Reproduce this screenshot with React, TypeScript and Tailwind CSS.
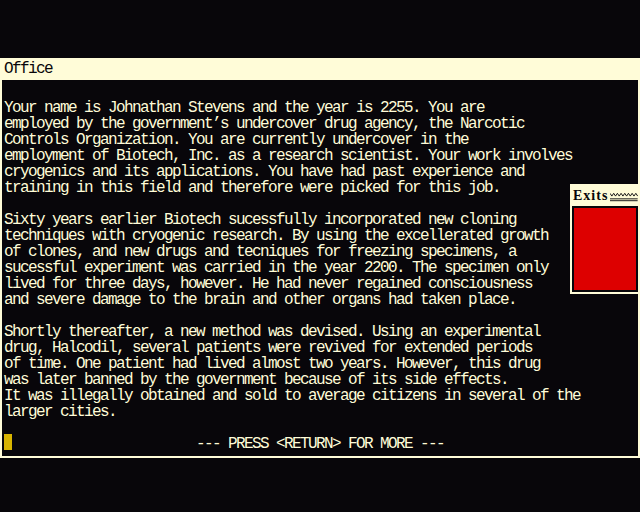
const cream = 'bg-[#fffcd8]'

const story = [
  'Your name is Johnathan Stevens and the year is 2255. You are',
  'employed by the government’s undercover drug agency, the Narcotic',
  'Controls Organization. You are currently undercover in the',
  'employment of Biotech, Inc. as a research scientist. Your work involves',
  'cryogenics and its applications. You have had past experience and',
  'training in this field and therefore were picked for this job.',
  '',
  'Sixty years earlier Biotech sucessfully incorporated new cloning',
  'techniques with cryogenic research. By using the excellerated growth',
  'of clones, and new drugs and tecniques for freezing specimens, a',
  'sucessful experiment was carried in the year 2200. The specimen only',
  'lived for three days, however. He had never regained consciousness',
  'and severe damage to the brain and other organs had taken place.',
  '',
  'Shortly thereafter, a new method was devised. Using an experimental',
  'drug, Halcodil, several patients were revived for extended periods',
  'of time. One patient had lived almost two years. However, this drug',
  'was later banned by the government because of its side effects.',
  'It was illegally obtained and sold to average citizens in several of the',
  'larger cities.',
  '',
]

function ExitsWindow() {
  return (
    <div className={`absolute left-[570px] top-[184px] flex h-[110px] w-[70px] flex-col p-[2px] ${cream}`}>
      <div className="flex h-[20px] items-center gap-[2px] pl-[1px]">
        <span className="font-['Liberation_Serif'] text-[14px] font-bold leading-none tracking-[1px] text-[#08060a]">
          Exits
        </span>
        <svg width="30" height="10" viewBox="0 0 30 10" className="mt-[1px]">
          <polyline
            points="0,1 2,4 4,1 6,4 8,1 10,4 12,1 14,4 16,1 18,4 20,1 22,4 24,1 26,4 28,1 30,4"
            fill="none"
            stroke="#08060a"
            strokeWidth="1"
          />
          <line x1="0" y1="7" x2="30" y2="7" stroke="#08060a" strokeWidth="1" />
          <line x1="0" y1="9" x2="30" y2="9" stroke="#08060a" strokeWidth="1" />
        </svg>
      </div>
      <div className="flex-1 bg-[#08060a] p-[2px]">
        <div className="h-full w-full bg-[#dd0000]" />
      </div>
    </div>
  )
}

export default function App() {
  return (
    <div className="relative h-[512px] w-[640px] overflow-hidden bg-[#08060a] font-['Liberation_Mono'] text-[16px] tracking-[-1.6px] text-[#fffcd8]">
      <div className="h-[58px]" />
      <div className="flex h-[400px] flex-col border-x-2 border-b-2 border-[#fffcd8]">
        <div className={`flex h-[22px] items-end pb-[3px] pl-[2px] text-[#08060a] ${cream}`}>
          <span className="leading-4">Office</span>
        </div>
        <div className="whitespace-pre pl-[2px] pt-[20px]">
          {story.map((line, i) => (
            <div key={i} className="h-4 leading-4">
              {line}
            </div>
          ))}
          <div className="flex h-4 leading-4">
            <span className="relative -top-[2px] inline-block h-4 w-2 bg-[#d8b400]" />
            <span>{'                       --- PRESS <RETURN> FOR MORE ---'}</span>
          </div>
        </div>
      </div>
      <ExitsWindow />
    </div>
  )
}
